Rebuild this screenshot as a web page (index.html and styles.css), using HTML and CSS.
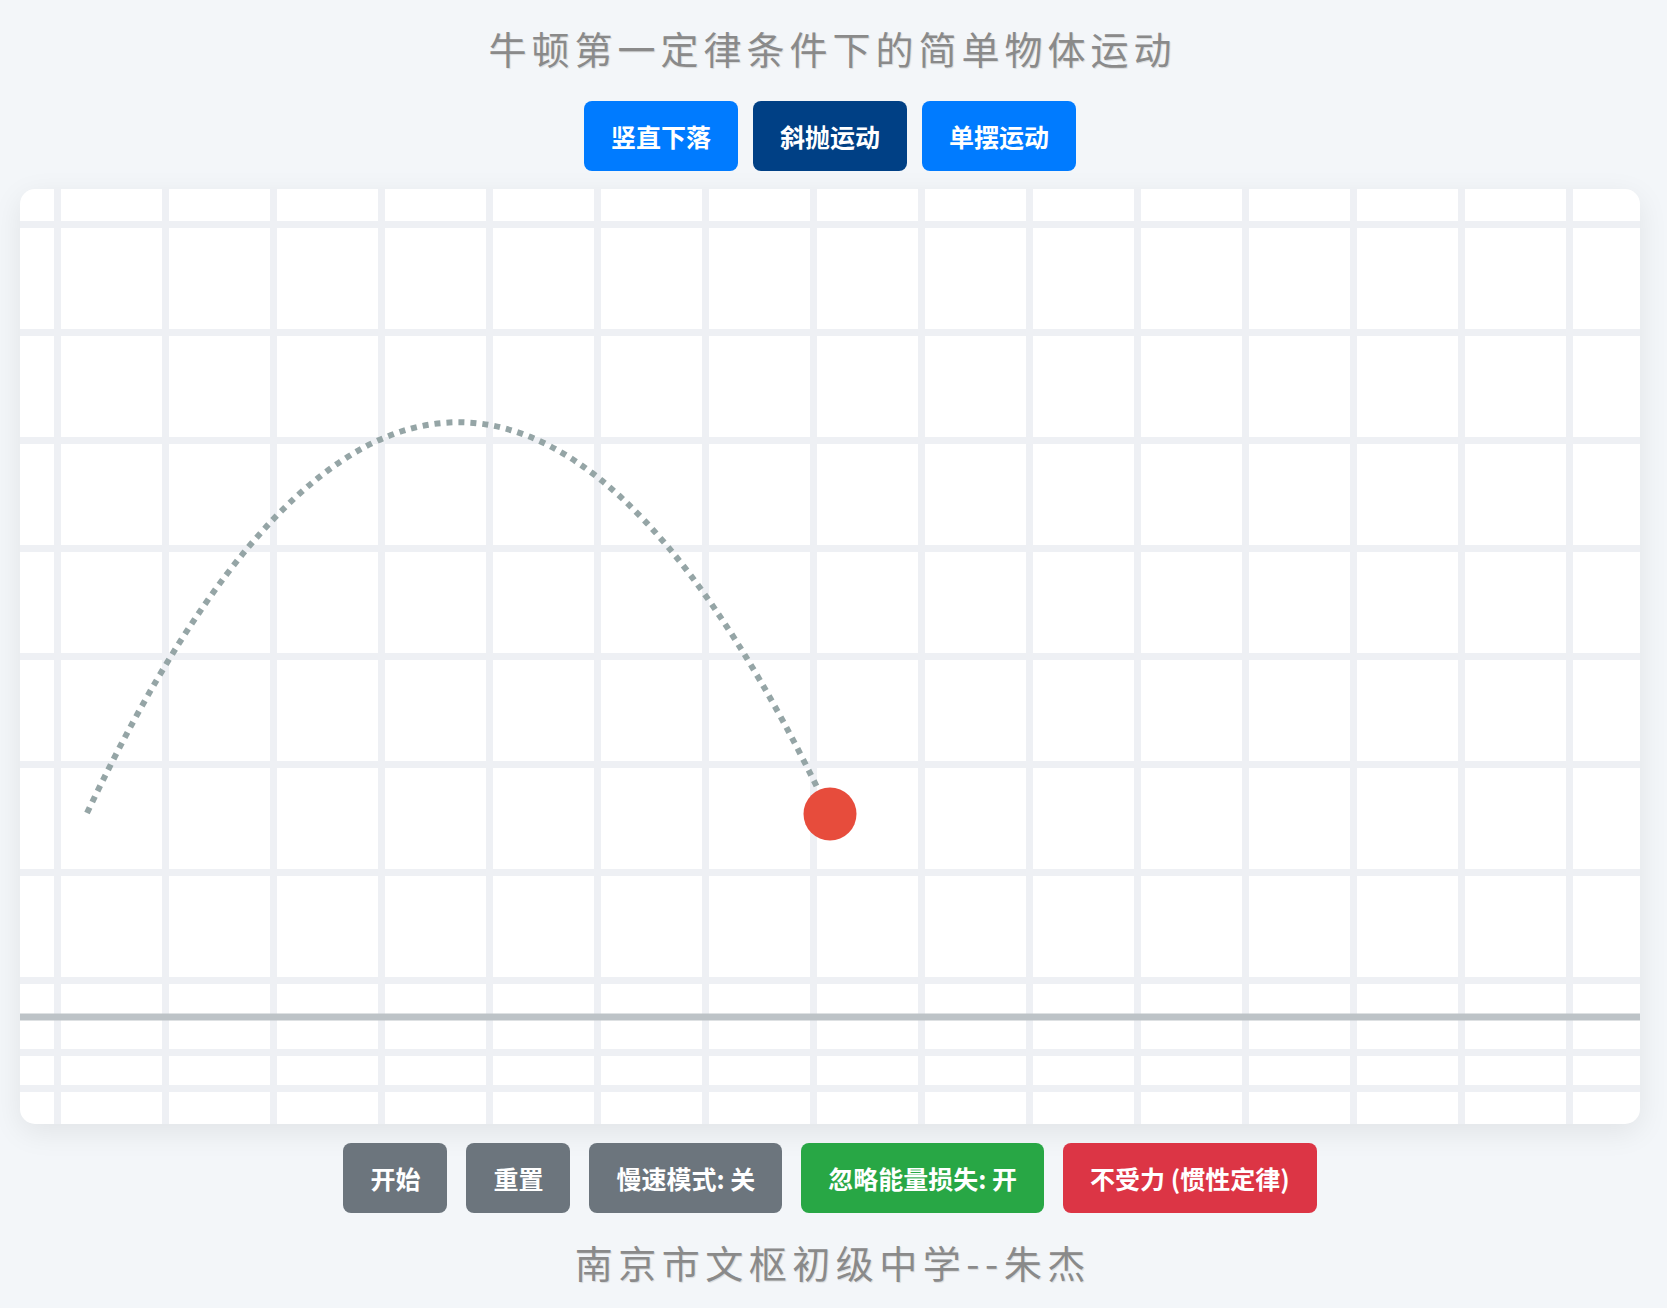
FILE: index.html
```html
<!DOCTYPE html>
<html lang="zh-CN">
<head>
  <meta charset="UTF-8">
  <meta name="viewport" content="width=device-width, initial-scale=1.0">
  <title>牛顿第一定律条件下的简单物体运动</title>
  <link rel="stylesheet" href="styles.css">
</head>
<body>
  <div class="page">
    <h1 class="title">牛顿第一定律条件下的简单物体运动</h1>

    <div class="mode-bar">
      <button class="mode-button">竖直下落</button>
      <button class="mode-button active">斜抛运动</button>
      <button class="mode-button">单摆运动</button>
    </div>

    <div class="stage">
      <svg class="stage-svg" viewBox="0 0 1620 935" width="1620" height="935">
        <g class="grid">
          <line x1="37.5" y1="0" x2="37.5" y2="935"/>
          <line x1="145.5" y1="0" x2="145.5" y2="935"/>
          <line x1="253.5" y1="0" x2="253.5" y2="935"/>
          <line x1="361.5" y1="0" x2="361.5" y2="935"/>
          <line x1="469.5" y1="0" x2="469.5" y2="935"/>
          <line x1="577.5" y1="0" x2="577.5" y2="935"/>
          <line x1="685.5" y1="0" x2="685.5" y2="935"/>
          <line x1="793.5" y1="0" x2="793.5" y2="935"/>
          <line x1="901.5" y1="0" x2="901.5" y2="935"/>
          <line x1="1009.5" y1="0" x2="1009.5" y2="935"/>
          <line x1="1117.5" y1="0" x2="1117.5" y2="935"/>
          <line x1="1225.5" y1="0" x2="1225.5" y2="935"/>
          <line x1="1333.5" y1="0" x2="1333.5" y2="935"/>
          <line x1="1441.5" y1="0" x2="1441.5" y2="935"/>
          <line x1="1549.5" y1="0" x2="1549.5" y2="935"/>

          <line x1="0" y1="35.5" x2="1620" y2="35.5"/>
          <line x1="0" y1="143.5" x2="1620" y2="143.5"/>
          <line x1="0" y1="251.5" x2="1620" y2="251.5"/>
          <line x1="0" y1="359.5" x2="1620" y2="359.5"/>
          <line x1="0" y1="467.5" x2="1620" y2="467.5"/>
          <line x1="0" y1="575.5" x2="1620" y2="575.5"/>
          <line x1="0" y1="683.5" x2="1620" y2="683.5"/>
          <line x1="0" y1="791.5" x2="1620" y2="791.5"/>
          <line x1="0" y1="863.5" x2="1620" y2="863.5"/>
          <line x1="0" y1="899.5" x2="1620" y2="899.5"/>
        </g>
        <line class="ground" x1="0" y1="828" x2="1620" y2="828"/>
        <path class="trail" d="M67 624 Q438.5 -158 810 625"/>
        <circle class="ball" cx="810" cy="625" r="26.5"/>
      </svg>
    </div>

    <div class="control-bar">
      <button class="control-button gray">开始</button>
      <button class="control-button gray">重置</button>
      <button class="control-button gray">慢速模式: 关</button>
      <button class="control-button green">忽略能量损失: 开</button>
      <button class="control-button red">不受力 (惯性定律)</button>
    </div>

    <p class="footer">南京市文枢初级中学--朱杰</p>
  </div>
</body>
</html>
```

FILE: styles.css
```css
* {
  margin: 0;
  padding: 0;
  box-sizing: border-box;
}
body {
  font-family: "Noto Sans CJK SC", "Noto Sans", sans-serif;
  background-color: #f3f6f9;
  padding: 13px 0 0 20px;
}
.page {
  width: 1620px;
}
.title {
  font-size: 38px;
  font-weight: 400;
  line-height: 70px;
  letter-spacing: 5px;
  color: #8a8a8a;
  text-align: center;
  padding-left: 5px;
  text-shadow: 1px 1px 1px rgba(0, 0, 0, 0.12);
}
.mode-bar {
  display: flex;
  justify-content: center;
  gap: 15px;
  margin-top: 18px;
}
.mode-button,
.control-button {
  font-family: "Noto Sans CJK SC", "Noto Sans", sans-serif;
  font-size: 25px;
  font-weight: 700;
  line-height: 36px;
  color: white;
  border: none;
  border-radius: 8px;
  cursor: pointer;
}
.mode-button {
  background-color: #007bff;
  padding: 17px 27px;
}
.mode-button.active {
  background-color: #004085;
}
.stage {
  margin-top: 18px;
  width: 1620px;
  height: 935px;
  background-color: white;
  border-radius: 15px;
  box-shadow: 0 8px 30px rgba(0, 0, 0, 0.08);
  overflow: hidden;
}
.stage-svg {
  display: block;
}
.grid line {
  stroke: #eef0f4;
  stroke-width: 7;
}
.ground {
  stroke: #bdc3c7;
  stroke-width: 7;
}
.trail {
  fill: none;
  stroke: #95a5a6;
  stroke-width: 6;
  stroke-dasharray: 6 6;
}
.ball {
  fill: #e74c3c;
}
.control-bar {
  display: flex;
  justify-content: center;
  gap: 19px;
  margin-top: 19px;
}
.control-button {
  padding: 17px 27px;
}
.control-button.gray {
  background-color: #6c757d;
}
.control-button.green {
  background-color: #28a745;
}
.control-button.red {
  background-color: #dc3545;
}
.footer {
  font-size: 38px;
  font-weight: 400;
  line-height: 70px;
  letter-spacing: 5.5px;
  color: #8a8a8a;
  text-align: center;
  margin-top: 14px;
  padding-left: 5.5px;
  text-shadow: 1px 1px 1px rgba(0, 0, 0, 0.12);
}
```
